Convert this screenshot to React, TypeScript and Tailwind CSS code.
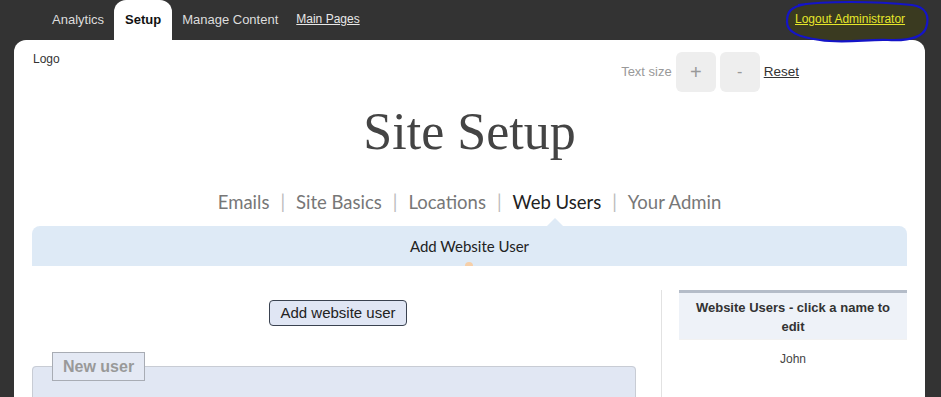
import React from 'react';

const topTabs = ['Analytics', 'Setup', 'Manage Content'];
const subNav = ['Emails', 'Site Basics', 'Locations', 'Web Users', 'Your Admin'];

function TopBar() {
    return (
        <div className="relative flex h-10 items-end pl-[42px] text-[13px] font-['Liberation_Sans',Arial,sans-serif]">
            {topTabs.map((t) => (
                <div
                    key={t}
                    className={`flex h-10 items-center px-[10px] ${t === 'Setup' ? 'rounded-t-[12px] bg-white px-[11px] font-bold text-[#111]' : 'text-[#ddd]'}`}
                >
                    {t}
                </div>
            ))}
            <a className="ml-[8px] flex h-10 items-center pb-[3px] text-[12px] text-[#e8e8e8] underline">Main Pages</a>

            {/* hand drawn highlight round the logout link */}
            <svg className="absolute left-[784px] top-0 h-[46px] w-[148px]" viewBox="0 0 148 46">
                <path
                    d="M14 5 C40 1 90 1 128 5 C142 7 146 16 142 28 C138 38 124 41 104 40 C84 39 60 44 36 40 C14 37 3 32 3 22 C3 12 6 7 22 4"
                    fill="#3a3a20"
                    stroke="#1414c8"
                    strokeWidth="2.2"
                />
            </svg>
            <a className="absolute left-[795px] top-[10px] text-[12px] text-[#e6e62a] underline">Logout Administrator</a>
        </div>
    );
}

function Header() {
    return (
        <div className="flex items-start justify-between pt-3 pl-[1px] pr-[108px]">
            <span className="text-[12px] leading-[14px] text-[#333]">Logo</span>
            <div className="flex items-center gap-1 text-[13px]">
                <span className="text-[#999]">Text size</span>
                <button className="h-10 w-10 rounded-[6px] bg-[#eeeeee] text-[20px] text-[#999]">+</button>
                <button className="h-10 w-10 rounded-[6px] bg-[#eeeeee] text-[16px] text-[#999]">-</button>
                <a className="text-[13.5px] text-[#333] underline">Reset</a>
            </div>
        </div>
    );
}

function SubNav() {
    return (
        <div className="mt-[26px] flex justify-center text-[18.5px] leading-6 font-['Lato',sans-serif] text-[#777]">
            {subNav.map((s, i) => (
                <React.Fragment key={s}>
                    {i > 0 && <span className="mx-[11px] text-[#bbb]">|</span>}
                    <span className={s === 'Web Users' ? 'text-[#222]' : ''}>{s}</span>
                </React.Fragment>
            ))}
        </div>
    );
}

export default function App() {
    return (
        <div className="h-[397px] overflow-hidden bg-[#333333] font-['Liberation_Sans',Arial,sans-serif]">
            <TopBar />
            <div className="ml-[14px] mr-[16px] h-[400px] rounded-t-[12px] bg-white px-[18px]">
                <Header />

                <h1 className="mt-[8px] text-center text-[52px] leading-[64px] text-[#444] font-['Liberation_Serif',serif]">
                    Site Setup
                </h1>

                <SubNav />

                <div className="relative mt-3 flex h-10 items-center justify-center rounded-t-[8px] bg-[#deeaf6] text-[15px] text-[#222] font-['Lato',sans-serif]">
                    <div className="absolute left-[515px] top-[-8px] h-0 w-0 border-x-[8px] border-b-[8px] border-x-transparent border-b-[#deeaf6]" />
                    Add Website User
                    <div className="absolute bottom-0 left-[433px] h-[4px] w-[8px] rounded-t-full bg-[#f6cfa8]" />
                </div>

                <div className="mt-6 flex">
                    {/* left column */}
                    <div className="w-[630px] border-r border-[#e2e2e2] pr-[17px]">
                        <div className="flex justify-center pt-[10px]">
                            <button className="h-[26px] rounded-[4px] border border-[#3a4250] bg-[#e0e6f4] px-[10px] text-[15px] text-[#222]">
                                Add website user
                            </button>
                        </div>
                        <fieldset className="mt-[26px] mr-2 h-[60px] rounded-[4px] border border-[#c8ccd4] bg-[#e1e7f3] px-[19px]">
                            <legend className="border border-[#a8acb4] bg-[#e4e9f4] px-[10px] text-[16px] leading-[27px] font-bold text-[#999]">
                                New user
                            </legend>
                        </fieldset>
                    </div>

                    {/* right column */}
                    <div className="ml-[17px] w-[228px]">
                        <div className="border-t-[3px] border-[#b4bcc8] bg-[#eef2f8] px-2 pt-[5px] pb-[3px] text-center text-[13px] leading-[19px] font-bold text-[#333]">
                            Website Users - click a name to edit
                        </div>
                        <div className="border-t border-[#f2f2f2] pt-[10px] text-center text-[12px] text-[#444]">John</div>
                    </div>
                </div>
            </div>
        </div>
    );
}
